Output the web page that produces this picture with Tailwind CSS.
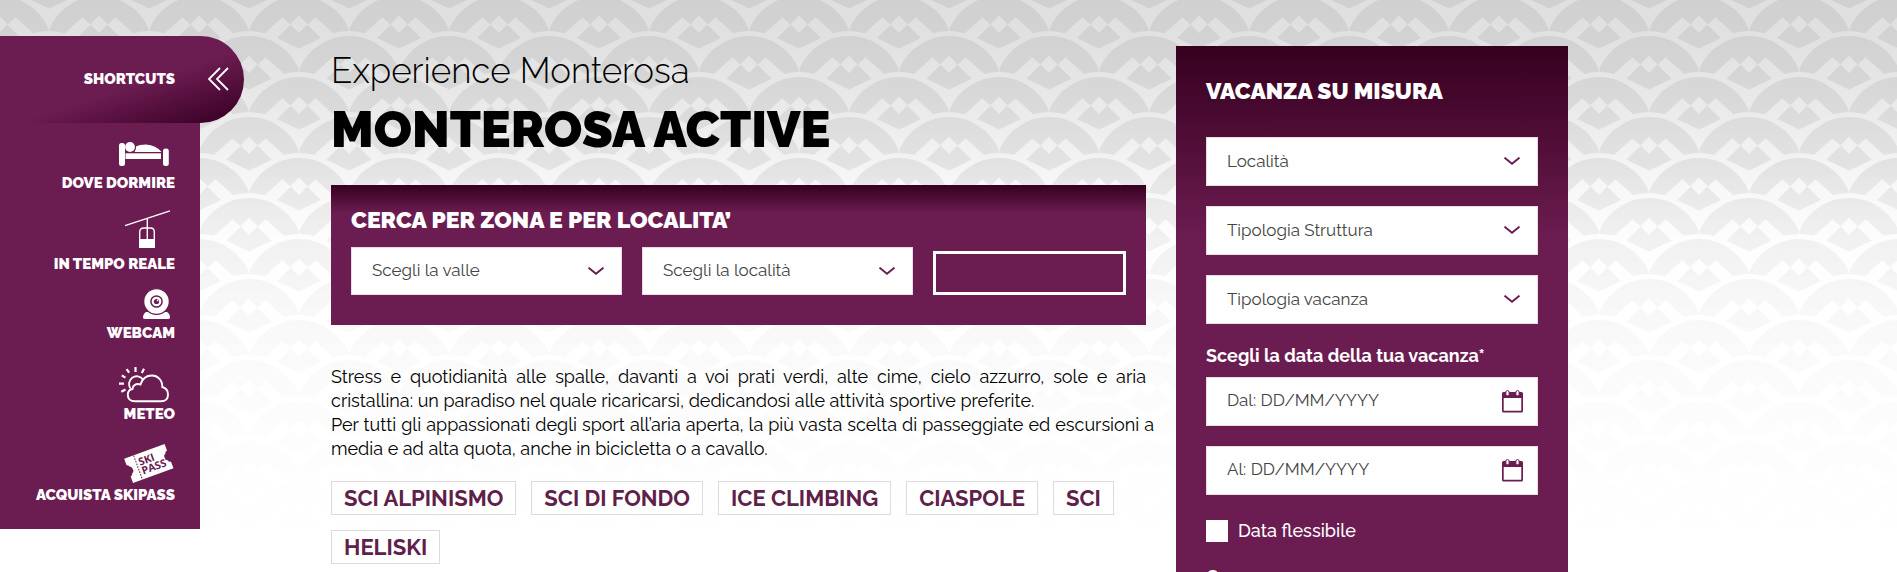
<!DOCTYPE html>
<html lang="it">
<head>
<meta charset="utf-8">
<meta name="viewport" content="width=device-width, initial-scale=1">
<title>Monterosa Active</title>
<script src="https://cdn.jsdelivr.net/npm/@tailwindcss/browser@4"></script>
</head>
<body class="bg-white font-['Raleway','Lato',sans-serif] text-black">
<div class="relative isolate h-screen overflow-hidden">

  <!-- Scalloped backdrop fading to white -->
  <div class="absolute inset-x-0 top-0 -z-10 h-[572px] bg-[linear-gradient(to_bottom,#dfdfdf_0,#e2e2e2_50px,#ebebeb_115px,#f7f7f7_185px,#fdfdfd_240px,#ffffff_300px)]" aria-hidden="true">
    <svg class="h-full w-full mix-blend-multiply [mask-image:linear-gradient(to_bottom,black_170px,rgb(0_0_0/0.5)_290px,rgb(0_0_0/0.3)_350px,rgb(0_0_0/0.15)_420px,rgb(0_0_0/0.05)_500px,transparent_560px)]">
      <defs>
        <g id="fan">
          <path fill="#fff" d="M-50 12.6L-27 1.6A59 59 0 0 1 27 1.6L50 12.6V60H-50Z"/>
          <path fill="#eeeeee" d="M-49.5 32.5A54 54 0 0 1 49.5 32.5V60H-49.5Z"/>
          <path fill="#fff" d="M0 19.5L8.7 28.3L0 37L-8.7 28.3ZM-16.7 21.3L-8.3 28.7L-26 46H-44ZM16.7 21.3L8.3 28.7L26 46H44Z"/>
        </g>
        <pattern id="scales" width="100" height="81" patternUnits="userSpaceOnUse" patternTransform="translate(-1 -4)">
          <use href="#fan" x="50" y="-41"/>
          <use href="#fan" x="0" y="0"/><use href="#fan" x="100" y="0"/>
          <use href="#fan" x="50" y="40"/>
          <use href="#fan" x="0" y="81"/><use href="#fan" x="100" y="81"/>
        </pattern>
      </defs>
      <rect width="100%" height="100%" fill="url(#scales)"/>
    </svg>
  </div>

  <!-- Shortcut drawer floating over the page edge -->
  <nav class="absolute left-0 top-9 w-[200px] bg-[#6b1c50] pb-6 text-[15px] leading-5 font-black text-white" aria-label="Shortcuts">
    <button type="button" class="flex h-[87px] w-[244px] items-center justify-end gap-8 rounded-r-full bg-[linear-gradient(162deg,#6b1c50_56%,#3a0027_96%)] pr-[15px] pb-0.5">
      <span>SHORTCUTS</span>
      <svg class="h-6 w-[22px]" viewBox="0 0 22 24" fill="none" stroke="#fff" stroke-width="1.8"><path d="M13 1L2 12L13 23M21 1L10 12L21 23"/></svg>
    </button>
    <ul class="pr-[25px]">
      <li class="pt-1.5">
        <a href="#dormire" class="flex flex-col items-end">
          <svg class="h-11 w-14" viewBox="0 0 56 44" fill="#fff"><rect x="0" y="14" width="6" height="23" rx="2.5"/><circle cx="11" cy="18" r="4.9"/><path d="M15.5 23Q17.500 20 17 17.500Q20 15.500 27 15.500Q37 16 42.500 23Z"/><rect x="6.500" y="24.300" width="35.500" height="5.700"/><rect x="44" y="19.500" width="5.800" height="17.500" rx="2.500"/></svg>
          <span>DOVE DORMIRE</span>
        </a>
      </li>
      <li class="pt-[17px]">
        <a href="#live" class="flex flex-col items-end">
          <svg class="h-11 w-14" viewBox="0 0 56 44" fill="none" stroke="#fff" stroke-width="1.4"><path d="M6 15.700L51 .9"/><path d="M28.300 8.500V30"/><path d="M20.700 37V22Q20.700 18 25 18H31.500Q35.300 18 35.300 22V37"/><path d="M20 29H36V38H20Z" fill="#fff" stroke="none"/></svg>
          <span>IN TEMPO REALE</span>
        </a>
      </li>
      <li class="pt-[5px]">
        <a href="#webcam" class="flex flex-col items-end">
          <svg class="h-11 w-14" viewBox="0 0 56 44"><path fill="#fff" d="M27 33Q24 35 24 38.500Q24 40 26 40H49Q51 40 51 38.500Q51 35 48 33Z"/><circle cx="37.500" cy="22.500" r="12.900" fill="#fff" stroke="#6b1c50" stroke-width="1.400"/><circle cx="37.500" cy="22.500" r="5.600" fill="none" stroke="#6b1c50" stroke-width="1.500"/><circle cx="37.500" cy="22.500" r="2.600" fill="#6b1c50"/><circle cx="38.600" cy="21.400" r=".9" fill="#fff"/></svg>
          <span>WEBCAM</span>
        </a>
      </li>
      <li class="pt-[17px]">
        <a href="#meteo" class="flex flex-col items-end">
          <svg class="h-11 w-14" viewBox="0 0 56 44" fill="none" stroke="#fff" stroke-width="1.900"><path d="M16 41.300C11 41.300 8.800 38.500 8.800 34.800C8.800 31.500 11 29.500 13.500 29C13.500 25.500 17 23 21.500 24.500C23.500 18 28.500 15.500 33 15.500C38.500 15.500 43.500 20 43.300 27C47 28 49 31 49 34.500C49 39 46 41.300 42 41.300Z"/><path d="M11.500 28.500A7.700 7.700 0 1 1 24 19.500"/><path d="M16.500 7V12M7.600 9.200L10.200 12.600M2.800 15.300L6.400 17.700M0 23.700H5M2.300 31.700L6.500 29.500M25 8.800L22.800 13" stroke-width="2.200"/></svg>
          <span>METEO</span>
        </a>
      </li>
      <li class="pt-[17px]">
        <a href="#skipass" class="flex flex-col items-end">
          <svg class="h-11 w-14" viewBox="0 0 56 44"><g transform="translate(29.800 22.500) rotate(-20)"><path fill="#fff" d="M-21.500-13H21.500V-6Q19 -5.500 19 -3.500Q16.500 -3 17 0Q16.500 3 19 3.500Q19 5.500 21.500 6V13H-21.500V6Q-19 5.500 -19 3.500Q-16.500 3 -17 0Q-16.500 -3 -19 -3.500Q-19 -5.500 -21.500 -6Z"/><path d="M-11.500-12.500V13" stroke="#6b1c50" stroke-width="1" stroke-dasharray="1.600 1.200"/><g fill="#6b1c50" font-family="Open Sans, sans-serif" font-weight="700" font-size="10.500"><text x="-9" y="-1">SKI</text><text x="-9" y="8.500">PASS</text></g></g></svg>
          <span>ACQUISTA SKIPASS</span>
        </a>
      </li>
    </ul>
  </nav>

  <div class="mx-auto grid max-w-[1239px] grid-cols-[minmax(0,1fr)_392px] items-start gap-[30px] pl-0.5">
    <main class="pt-[51px]">
      <p class="text-[35px] leading-10 font-light">Experience Monterosa</p>
      <h1 class="mt-[9px] text-[50px] leading-[60px] font-black">MONTEROSA ACTIVE</h1>

      <form class="mt-[25px] bg-[#6b1c50] bg-[linear-gradient(to_bottom,#36001f_0,#6b1c50_28px)] px-5 pt-5 pb-[30px]">
        <h2 class="text-[23px] leading-[30px] font-black text-white">CERCA PER ZONA E PER LOCALITA’</h2>
        <div class="mt-3 grid grid-cols-[1fr_1fr_193px] items-end gap-5">
          <div class="relative">
            <select aria-label="Valle" class="h-12 w-full appearance-none rounded-none border border-[#e8dbe4] bg-white px-5 text-[17px] text-[#444]"><option>Scegli la valle</option></select>
            <svg class="pointer-events-none absolute top-5 right-[18px] h-2 w-4" viewBox="0 0 16 8" fill="none" stroke="#6b1c50" stroke-width="2"><path d="M.5.700L8 6.700L15.500.700"/></svg>
          </div>
          <div class="relative">
            <select aria-label="Località" class="h-12 w-full appearance-none rounded-none border border-[#e8dbe4] bg-white px-5 text-[17px] text-[#444]"><option>Scegli la località</option></select>
            <svg class="pointer-events-none absolute top-5 right-[18px] h-2 w-4" viewBox="0 0 16 8" fill="none" stroke="#6b1c50" stroke-width="2"><path d="M.5.700L8 6.700L15.500.700"/></svg>
          </div>
          <button type="submit" aria-label="Cerca" class="h-11 border-3 border-white"></button>
        </div>
      </form>

      <div class="mt-10 text-justify text-lg leading-6">
        <p>Stress e quotidianità alle spalle, davanti a voi prati verdi, alte cime, cielo azzurro, sole e aria cristallina: un paradiso nel quale ricaricarsi, dedicandosi alle attività sportive preferite.</p>
        <p class="-mr-2">Per tutti gli appassionati degli sport all’aria aperta, la più vasta scelta di passeggiate ed escursioni a media e ad alta quota, anche in bicicletta o a cavallo.</p>
      </div>

      <ul class="mt-5 flex flex-wrap gap-[15px] text-[22px] leading-8 font-bold text-[#5f2049]">
        <li><a href="#alpinismo" class="block border border-[#dcdcdc] bg-white px-3">SCI ALPINISMO</a></li>
        <li><a href="#fondo" class="block border border-[#dcdcdc] bg-white px-3">SCI DI FONDO</a></li>
        <li><a href="#ice" class="block border border-[#dcdcdc] bg-white px-3">ICE CLIMBING</a></li>
        <li><a href="#ciaspole" class="block border border-[#dcdcdc] bg-white px-3">CIASPOLE</a></li>
        <li><a href="#sci" class="block border border-[#dcdcdc] bg-white px-3">SCI</a></li>
        <li><a href="#heliski" class="block border border-[#dcdcdc] bg-white px-3">HELISKI</a></li>
      </ul>
    </main>

    <aside class="mt-[46px] bg-[#6b1c50] bg-[linear-gradient(to_bottom,#36001f_0,#6b1c50_190px)] px-[30px] pt-[30px] pb-10 text-white">
      <h2 class="text-[23px] leading-[30px] font-black">VACANZA SU MISURA</h2>
      <form class="mt-[31px]">
        <div class="flex flex-col gap-5">
          <div class="relative">
            <select aria-label="Località" class="h-[49px] w-full appearance-none rounded-none border border-[#e8dbe4] bg-white px-5 text-[17px] text-[#444]"><option>Località</option></select>
            <svg class="pointer-events-none absolute top-5 right-[18px] h-2 w-4" viewBox="0 0 16 8" fill="none" stroke="#6b1c50" stroke-width="2"><path d="M.5.700L8 6.700L15.500.700"/></svg>
          </div>
          <div class="relative">
            <select aria-label="Tipologia Struttura" class="h-[49px] w-full appearance-none rounded-none border border-[#e8dbe4] bg-white px-5 text-[17px] text-[#444]"><option>Tipologia Struttura</option></select>
            <svg class="pointer-events-none absolute top-5 right-[18px] h-2 w-4" viewBox="0 0 16 8" fill="none" stroke="#6b1c50" stroke-width="2"><path d="M.5.700L8 6.700L15.500.700"/></svg>
          </div>
          <div class="relative">
            <select aria-label="Tipologia vacanza" class="h-[49px] w-full appearance-none rounded-none border border-[#e8dbe4] bg-white px-5 text-[17px] text-[#444]"><option>Tipologia vacanza</option></select>
            <svg class="pointer-events-none absolute top-5 right-[18px] h-2 w-4" viewBox="0 0 16 8" fill="none" stroke="#6b1c50" stroke-width="2"><path d="M.5.700L8 6.700L15.500.700"/></svg>
          </div>
        </div>
        <fieldset class="mt-[18px]">
          <legend class="text-lg leading-7 font-bold">Scegli la data della tua vacanza*</legend>
          <div class="mt-[7px] flex flex-col gap-5">
            <div class="relative">
              <input type="text" aria-label="Dal" placeholder="Dal: DD/MM/YYYY" class="h-[49px] w-full border border-[#e8dbe4] bg-white px-5 pb-1 text-[17px] text-[#444] placeholder:text-[#444]">
              <svg class="pointer-events-none absolute top-3 right-[15px] h-6 w-[21px]" viewBox="0 0 21 24" fill="#6b1c50"><path d="M1.500 3H19.500Q21 3 21 4.500V22Q21 23.500 19.500 23.500H1.500Q0 23.500 0 22V4.500Q0 3 1.500 3ZM1.700 9V21.800H19.300V9Z" fill-rule="evenodd"/><rect x="3.900" y="1.600" width="3.200" height="5.200" rx="1.500" fill="#fff" stroke="#6b1c50"/><rect x="13.900" y="1.600" width="3.200" height="5.200" rx="1.500" fill="#fff" stroke="#6b1c50"/></svg>
            </div>
            <div class="relative">
              <input type="text" aria-label="Al" placeholder="Al: DD/MM/YYYY" class="h-[49px] w-full border border-[#e8dbe4] bg-white px-5 pb-1 text-[17px] text-[#444] placeholder:text-[#444]">
              <svg class="pointer-events-none absolute top-3 right-[15px] h-6 w-[21px]" viewBox="0 0 21 24" fill="#6b1c50"><path d="M1.500 3H19.500Q21 3 21 4.500V22Q21 23.500 19.500 23.500H1.500Q0 23.500 0 22V4.500Q0 3 1.500 3ZM1.700 9V21.800H19.300V9Z" fill-rule="evenodd"/><rect x="3.900" y="1.600" width="3.200" height="5.200" rx="1.500" fill="#fff" stroke="#6b1c50"/><rect x="13.900" y="1.600" width="3.200" height="5.200" rx="1.500" fill="#fff" stroke="#6b1c50"/></svg>
            </div>
          </div>
        </fieldset>
        <label class="mt-6 flex items-center gap-2.5 text-lg leading-6 font-medium">
          <input type="checkbox" class="size-[22px] appearance-none bg-white checked:border-6 checked:border-white checked:bg-[#6b1c50]">
          Data flessibile
        </label>
        <p class="mt-5 text-lg leading-7 font-bold">Camere</p>
      </form>
    </aside>
  </div>
</div>
</body>
</html>
